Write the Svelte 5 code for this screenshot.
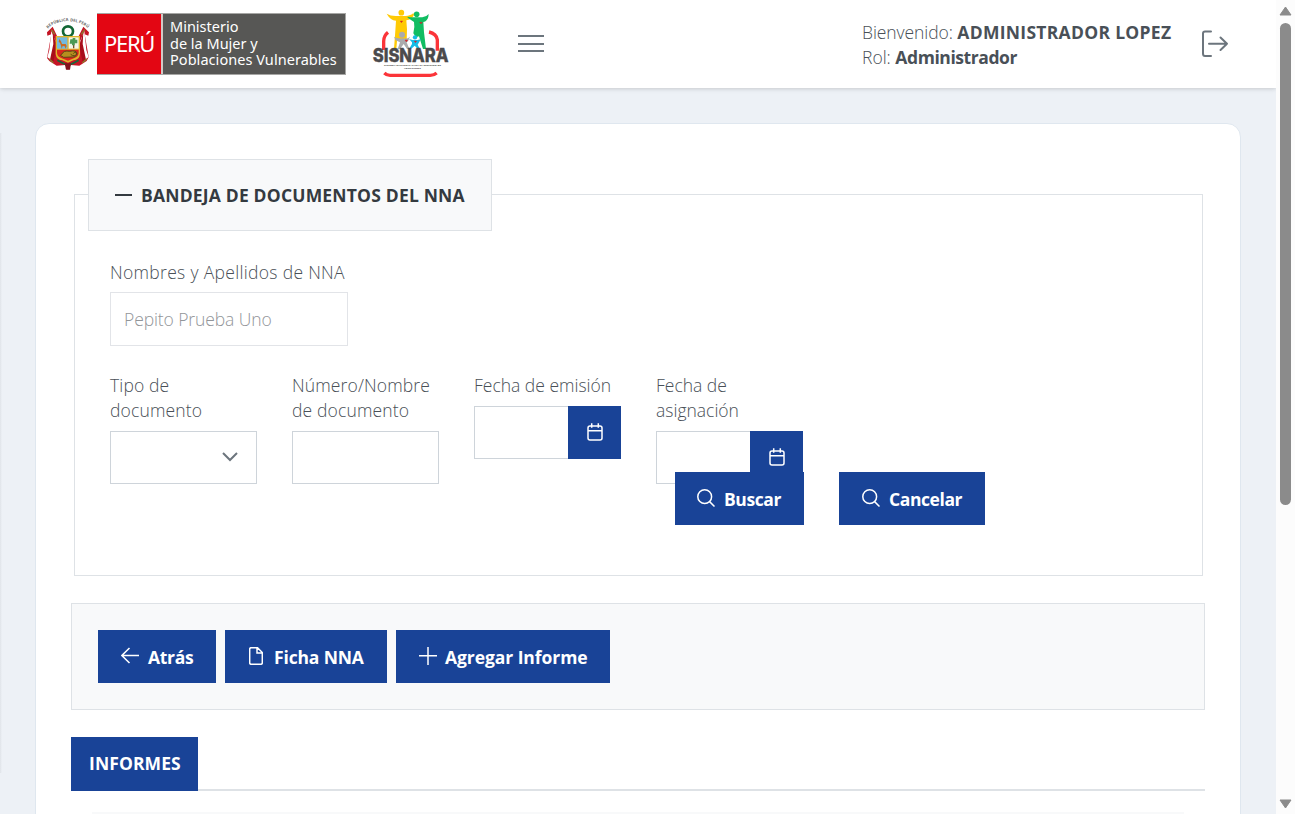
<script>
  const fields = [
    { id: 'tipo', label: 'Tipo de documento', kind: 'select' },
    { id: 'numero', label: 'Número/Nombre de documento', kind: 'text' },
    { id: 'emision', label: 'Fecha de emisión', kind: 'date' },
    { id: 'asignacion', label: 'Fecha de asignación', kind: 'date' }
  ];
</script>

{#snippet search()}
  <svg class="ico" width="18" height="18" viewBox="0 0 18 18"><circle cx="7.7" cy="7.7" r="6.9" /><path d="M12.6 12.6L17.5 17.5" /></svg>
{/snippet}

<div class="app">
  <div class="page">
    <header>
      <svg class="arms" width="44" height="58" viewBox="30 42 132 174">
        <defs><path id="arc" d="M36 86Q52 66 95 63Q140 66 156 86" /></defs>
        <text class="motto"><textPath href="#arc" textLength="130">REPÚBLICA DEL PERÚ</textPath></text>
        <path d="M50 80L33 97 34 107 46 103 33 174 40 183 62 197 88 195 96 210 104 195 130 197 152 183 158 171 146 103 157 107 159 97 142 80 124 116 67 116Z" fill="#c51525" />
        <path d="M46 93L40 150 34 172 46 180 58 122ZM145 93L151 150 158 171 146 180 133 122Z" fill="#fff" />
        <path d="M50 96L62 138 52 186 42 179 52 132ZM142 96L130 138 140 186 150 179 140 132Z" fill="#a80c1a" />
        <path d="M46 89L56 103M146 89L136 103M40 177L52 188M152 177L139 188" stroke="#8b7c2b" stroke-width="4" />
        <circle cx="96" cy="94" r="15" fill="none" stroke="#126735" stroke-width="8" />
        <path d="M59 108H132V162Q130 180 112 181L96 188 79 181Q61 179 59 162Z" fill="#e0b42c" />
        <path d="M63 112H94V146H63Z" fill="#72b9df" /><path d="M98 112H128V146H98Z" fill="#f3f5e6" />
        <path d="M63 149H128V160Q126 173 110 176L96 182 81 176Q65 173 63 160Z" fill="#db251d" />
        <path d="M70 117l5 7 3 8h11l3 6-3 8-3-7-6-1-3 8-2-9-3-9-4-2z" fill="#cb6b21" />
        <path d="M113 120V145" stroke="#76502b" stroke-width="4" /><path d="M103 118h7v-4h8v5h6v11h-8v6h-8v-5h-7z" fill="#4b9a54" />
        <path d="M77 163Q83 150 101 154Q122 149 123 162Q118 173 105 171L83 172 73 166Z" fill="#b58e1f" stroke="#5b4515" stroke-width="3" />
        <path d="M112 161Q118 152 122 162Q116 172 104 163" fill="none" stroke="#5b4515" stroke-width="3" />
        <path d="M64 181Q80 190 91 194M128 181Q113 190 101 194" fill="none" stroke="#17673b" stroke-width="5" /><path d="M86 190L105 190 102 209 90 209Z" fill="#83121c" />
      </svg>
      <div class="brand">
        <div class="peru"><span>PERÚ</span></div>
        <div class="ministry"><span>Ministerio</span><span>de la Mujer y</span><span class="m3">Poblaciones Vulnerables</span></div>
      </div>
      <svg class="sisnara" width="77" height="72" viewBox="36 24 231 216">
        <path d="M71 150V124Q71 107 84 97M232 152V119Q229 101 207 96M73 219Q80 226 90 226H211Q222 226 230 219" fill="none" stroke="#fb3439" stroke-width="10" />
        <circle cx="124" cy="38" r="8.5" fill="#ffca05" /><path d="M80 41Q92 49 111 48H136Q153 47 160 39L162 45Q155 59 139 61L141 88 140 122 111 123 109 146 102 146 106 92 108 62Q91 61 80 41Z" fill="#ffca05" />
        <circle cx="170" cy="43" r="8.5" fill="#11bd62" /><path d="M143 50L151 52H187Q199 51 206 42L205 50Q202 63 190 66L192 97 198 147H189L177 109 168 112 160 100Q165 80 162 66L143 53Z" fill="#11bd62" />
        <circle cx="126" cy="104" r="9" fill="#aaabad" /><path d="M102 111Q111 116 128 115Q143 118 150 110L144 124 140 127 148 147H141L131 132 120 147H113L120 127 107 121Z" fill="#aaabad" />
        <circle cx="165" cy="112" r="6.5" fill="#16bce6" /><path d="M147 117L158 120H173L183 117 176 129 173 134 180 147H174L164 137 153 147H147L156 132 156 127Z" fill="#16bce6" />
        <path d="M121 63l3 5 4-5zM179 67l4 5 4-5zM135 120l4 6 4-6zM163 123l3 5 4-5z" fill="#e62a33" stroke="#b71921" />
        <text x="38" y="185" textLength="228" lengthAdjust="spacingAndGlyphs" class="sis">SISNARA</text>
        <text x="72" y="198" textLength="171" lengthAdjust="spacingAndGlyphs" class="sub">SISTEMA NACIONAL PARA EL REGISTRO DE</text>
        <text x="132" y="207" textLength="51" lengthAdjust="spacingAndGlyphs" class="sub">ADOPCIONES</text>
      </svg>
      <button class="burger" aria-label="Menú"><i></i><i></i><i></i></button>
      <div class="user">
        <div><span class="u1">Bienvenido:</span> <b class="u2">ADMINISTRADOR LOPEZ</b></div>
        <div><span>Rol:</span> <b class="u4">Administrador</b></div>
      </div>
      <svg class="exit" width="28" height="28" viewBox="0 0 28 28"><path d="M10 1.5H4Q2 1.5 2 3.5V23.5Q2 26 4 26H10M8 13.8H26M19.5 7.5L26 13.8 19.5 20" /></svg>
    </header>

    <main>
      <div class="edge"></div>
      <div class="card">
        <fieldset>
          <legend><i class="minus"></i><span>BANDEJA DE DOCUMENTOS DEL NNA</span></legend>
          <div class="name">
            <label for="nombre">Nombres y Apellidos de NNA</label>
            <div class="box wide" id="nombre"><span>Pepito Prueba Uno</span></div>
          </div>
          <div class="fields">
            {#each fields as f}
              <div class="field">
                <span class="lab {f.id}">{f.label}</span>
                {#if f.kind === 'select'}
                  <div class="box select"><svg width="16" height="10" viewBox="0 0 16 10"><path d="M1 1L8 8 15 1" /></svg></div>
                {:else if f.kind === 'date'}
                  <div class="date">
                    <div class="box"></div>
                    <button class="cal" aria-label={f.label}><svg width="16" height="18" viewBox="0 0 16 18"><rect x="1" y="3" width="14" height="14" rx="2" /><path d="M1 7.7H15M4.7 .3V4.8M11.3 .3V4.8" /></svg></button>
                  </div>
                {:else}
                  <div class="box"></div>
                {/if}
              </div>
            {/each}
          </div>
          <div class="actions">
            <button class="btn b1">{@render search()}<span>Buscar</span></button>
            <button class="btn b2">{@render search()}<span>Cancelar</span></button>
          </div>
        </fieldset>

        <div class="toolbar">
          <button class="btn b3"><svg class="ico" width="18" height="18" viewBox="0 0 18 18"><path d="M8.5 1L.9 8.5 8.5 16M.9 8.5H18" /></svg><span>Atrás</span></button>
          <button class="btn b4"><svg class="ico" width="14" height="18" viewBox="0 0 14 18"><path d="M2.2 .7H8.5L13.3 5.5V15.8Q13.3 17.3 11.8 17.3H2.2Q.7 17.3 .7 15.8V2.2Q.7 .7 2.2 .7ZM8 .7V6H13.3" /></svg><span>Ficha NNA</span></button>
          <button class="btn b5"><svg class="ico" width="18" height="18" viewBox="0 0 18 18"><path d="M9 0V18M0 8.7H18" /></svg><span>Agregar Informe</span></button>
        </div>

        <div class="tabs"><div class="tab"><span>INFORMES</span></div></div>
        <div class="panel"></div>
      </div>
    </main>
  </div>
  <div class="scroll">
    <svg width="13" height="10" viewBox="0 0 13 10"><path d="M6.5 1L12 9H1Z" /></svg>
    <div class="thumb"></div>
    <svg class="down" width="13" height="10" viewBox="0 0 13 10"><path d="M1 1H12L6.5 9Z" /></svg>
  </div>
</div>

<style>
  :global(body) { margin: 0; overflow: hidden; }
  .app, .app * { box-sizing: border-box; }
  .app { display: flex; width: 1295px; height: 814px; overflow: hidden; font: 300 17.5px/25px "Open Sans", "Noto Sans", sans-serif; color: #495057; background: #edf1f6; }
  .page { width: 1276px; flex: none; display: flex; flex-direction: column; overflow: hidden; }
  button { font: inherit; border: 0; padding: 0; margin: 0; border-radius: 0; }
  span, b { white-space: nowrap; }
  b { font-weight: 700; }

  header { height: 88px; flex: none; display: flex; align-items: flex-start; background: #fff; box-shadow: 0 0 4px rgba(0, 0, 0, .1), 0 1px 5px rgba(0, 0, 0, .1); padding-left: 46px; z-index: 1; }
  .arms { margin-top: 14px; overflow: visible; }
  .motto { font: 700 12px "Open Sans", sans-serif; fill: #666; }
  .brand { display: flex; margin: 13px 0 0 7px; width: 249px; height: 62px; border: 1px solid #a6a6a4; border-left: 0; background: #575755; color: #fff; font-family: "Noto Sans", sans-serif; font-weight: 400; }
  .peru { width: 66px; background: #e30613; border-right: 2px solid #d3c9c6; font-size: 22px; line-height: 59px; padding-left: 7px; letter-spacing: -1.3px; }
  .ministry { padding: 4px 0 0 7px; display: flex; flex-direction: column; font-size: 14.5px; line-height: 16.5px; }
  .m3 { letter-spacing: .05px; }
  .sisnara { margin: 8px 0 0 26px; overflow: visible; }
  .sis { font: 800 55px Inter, "Open Sans", sans-serif; fill: #4b4a4c; stroke: #4b4a4c; stroke-width: 1; }
  .sub { font: 700 6.5px "Open Sans", sans-serif; fill: #444; }
  .burger { display: flex; flex-direction: column; justify-content: space-between; background: none; width: 26px; height: 17px; margin: 35px 0 0 69px; }
  .burger i { height: 2px; background: #6c757d; }
  .user { margin: 20px 0 0 318px; width: 310px; }
  .u1 { letter-spacing: -.08px; }
  .u2 { letter-spacing: .29px; }
  .u4 { letter-spacing: -.42px; }
  .exit { margin: 30px 0 0 29px; fill: none; stroke: #6c757d; stroke-width: 2; stroke-linecap: round; stroke-linejoin: round; }

  main { flex: 1; display: flex; padding-top: 35px; }
  .edge { width: 2px; height: 640px; margin: 10px 33px 0 0; background: linear-gradient(90deg, #dfe3e8, #edf1f6); }
  .card { width: 1206px; flex: none; height: 740px; border: 1px solid #dfe7ef; border-radius: 14px; background: #fff; padding: 35px; }
  fieldset { margin: 0 2px 0 3px; min-width: 0; height: 417px; padding: 0 35px; border: 1px solid #dee2e6; }
  legend { display: flex; align-items: center; gap: 9px; margin-left: -22px; padding: 1px 26px 0; width: 404px; height: 71.6px; border: 1px solid #dee2e6; background: #f8f9fa; color: #343a40; font-weight: 700; letter-spacing: .19px; }
  .minus { width: 17px; height: 2px; background: #343a40; flex: none; margin-top: -1px; }
  .name { margin-top: 29.4px; }
  label { display: block; margin-bottom: 7px; letter-spacing: .32px; }
  .box { height: 53px; border: 1px solid #ced4da; background: #fff; }
  .wide { width: 238px; height: 54px; padding-left: 13px; line-height: 52px; color: #929599; border-color: #e2e4e8; letter-spacing: -.1px; }
  .fields { display: flex; gap: 35px; margin-top: 27px; height: 111px; }
  .field { width: 147px; }
  .lab { display: block; white-space: normal; margin-bottom: 8px; }
  .tipo, .numero { letter-spacing: .14px; }
  .select { display: flex; align-items: center; justify-content: flex-end; padding: 0 18px 1px 0; }
  .select svg { fill: none; stroke: #6c757d; stroke-width: 2; }
  .date { display: flex; }
  .date .box { width: 94px; border-right: 0; }
  .cal { width: 53px; height: 53px; background: #194397; display: flex; align-items: center; justify-content: center; padding-bottom: 1px; }
  .cal svg { fill: none; stroke: #fff; stroke-width: 1.5; }
  .btn { display: flex; align-items: center; gap: 9px; height: 53px; padding: 2px 0 0 22px; background: #194397; color: #fff; font-weight: 700; }
  .ico { fill: none; stroke: #fff; stroke-width: 1.5; flex: none; margin-top: -3px; }
  .actions { position: relative; z-index: 1; display: flex; gap: 35px; margin: -12px 0 0 565px; }
  .b1 { width: 129px; letter-spacing: -.4px; }
  .b2 { width: 146px; padding-left: 23px; letter-spacing: -.42px; }
  .b3 { width: 118px; padding-left: 23px; letter-spacing: -.3px; }
  .b4 { width: 162px; padding-left: 24px; gap: 11px; letter-spacing: -.15px; }
  .b5 { width: 214px; padding-left: 23px; gap: 8px; letter-spacing: -.07px; }
  .toolbar { margin-top: 27px; height: 107px; padding: 26px; border: 1px solid #dee2e6; background: #f8f9fa; display: flex; gap: 9px; }
  .tabs { margin-top: 27px; height: 54px; border-bottom: 2px solid #dee2e6; }
  .tab { width: 127px; height: 54px; background: #194397; color: #fff; font-weight: 700; line-height: 53px; padding-left: 18px; letter-spacing: .1px; }
  .panel { margin: 21px 21px 0; height: 50px; background: #f8f9fa; }

  .scroll { width: 19px; background: #fcfcfc; display: flex; flex-direction: column; align-items: center; padding: 6px 0 5px; }
  .scroll svg { fill: #8b8b8b; stroke: #8b8b8b; stroke-linejoin: round; flex: none; }
  .thumb { width: 11px; height: 482px; border-radius: 6px; background: #8b8b8b; margin-top: 7px; flex: none; }
  .down { margin-top: auto; }
</style>
